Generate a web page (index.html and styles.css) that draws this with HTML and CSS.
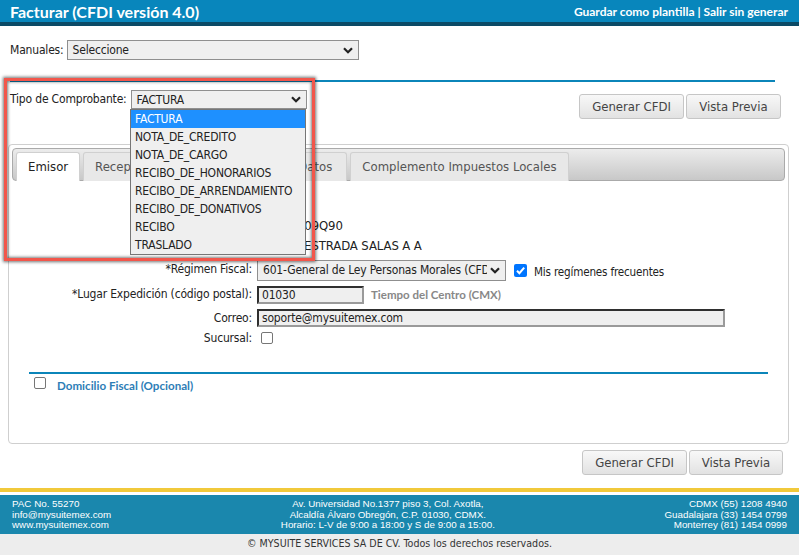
FILE: index.html
```html
<!DOCTYPE html>
<html lang="es">
<head>
<meta charset="utf-8">
<title>Facturar (CFDI versión 4.0)</title>
<link rel="stylesheet" href="styles.css">
</head>
<body>
<div class="page">
  <header class="topbar">
    <div class="title">Facturar (CFDI versión 4.0)</div>
    <div class="links">Guardar como plantilla | Salir sin generar</div>
  </header>

  <div class="manuales">
    <span class="lbl-inline">Manuales:</span>
    <div class="select sel-manuales"><span>Seleccione</span>
      <svg class="chev" width="10" height="7" viewBox="0 0 10 7"><path d="M1 1.2 L5 5.2 L9 1.2" fill="none" stroke="#222" stroke-width="2.2"/></svg>
    </div>
  </div>

  <div class="blue-line"></div>

  <div class="tipo-row">
    <span class="lbl-inline lbl-tipo">Tipo de Comprobante:</span>
    <div class="select sel-tipo"><span>FACTURA</span>
      <svg class="chev" width="10" height="7" viewBox="0 0 10 7"><path d="M1 1.2 L5 5.2 L9 1.2" fill="none" stroke="#222" stroke-width="2.2"/></svg>
    </div>
    <div class="buttons">
      <button class="btn btn-gen">Generar CFDI</button>
      <button class="btn btn-vista">Vista Previa</button>
    </div>
  </div>

  <section class="panel">
    <div class="tabbar">
      <div class="tab active">Emisor</div>
      <div class="tab">Receptor</div>
      <div class="tab">Conceptos</div>
      <div class="tab tab-otros">Otros Datos</div>
      <div class="tab">Complemento Impuestos Locales</div>
    </div>

    <div class="form">
      <div class="row r-rfc"><span class="lbl">RFC:</span><span class="val">ISE091109Q90</span></div>
      <div class="row r-razon"><span class="lbl">Razón Social:</span><span class="val">MAURO ESTRADA SALAS A A</span></div>
      <div class="row r-regimen">
        <span class="lbl">*Régimen Fiscal:</span>
        <div class="select sel-regimen"><span class="clip">601-General de Ley Personas Morales (CFDI)</span>
          <svg class="chev" width="10" height="7" viewBox="0 0 10 7"><path d="M1 1.2 L5 5.2 L9 1.2" fill="none" stroke="#222" stroke-width="2.2"/></svg>
        </div>
        <span class="cb checked"><svg width="13" height="13" viewBox="0 0 13 13"><path d="M3 6.8 L5.4 9.2 L10.2 3.6" fill="none" stroke="#fff" stroke-width="2"/></svg></span>
        <span class="cb-text">Mis regímenes frecuentes</span>
      </div>
      <div class="row r-lugar">
        <span class="lbl">*Lugar Expedición (código postal):</span>
        <div class="input in-cp">01030</div>
        <span class="tz">Tiempo del Centro (CMX)</span>
      </div>
      <div class="row r-correo">
        <span class="lbl">Correo:</span>
        <div class="input in-mail">soporte@mysuitemex.com</div>
      </div>
      <div class="row r-suc">
        <span class="lbl">Sucursal:</span>
        <span class="cb empty cb-suc"></span>
      </div>

      <div class="blue-line2"></div>
      <div class="domicilio">
        <span class="cb empty cb-dom"></span>
        <span class="dom-text">Domicilio Fiscal (Opcional)</span>
      </div>
    </div>
  </section>

  <div class="bottom-buttons">
    <button class="btn btn-gen">Generar CFDI</button>
    <button class="btn btn-vista">Vista Previa</button>
  </div>

  <footer class="footer">
    <div class="yellow"></div>
    <div class="fband">
      <div class="fcol fleft">PAC No. 55270<br>info@mysuitemex.com<br>www.mysuitemex.com</div>
      <div class="fcol fcenter">Av. Universidad No.1377 piso 3, Col. Axotla,<br>Alcaldía Álvaro Obregón, C.P. 01030, CDMX.<br>Horario: L-V de 9:00 a 18:00 y S de 9:00 a 15:00.</div>
      <div class="fcol fright">CDMX (55) 1208 4940<br>Guadalajara (33) 1454 0799<br>Monterrey (81) 1454 0999</div>
    </div>
    <div class="copy">© MYSUITE SERVICES SA DE CV. Todos los derechos reservados.</div>
  </footer>

  <div class="redbox"></div>
  <ul class="dropdown">
    <li class="hl">FACTURA</li>
    <li>NOTA_DE_CREDITO</li>
    <li>NOTA_DE_CARGO</li>
    <li>RECIBO_DE_HONORARIOS</li>
    <li>RECIBO_DE_ARRENDAMIENTO</li>
    <li>RECIBO_DE_DONATIVOS</li>
    <li>RECIBO</li>
    <li>TRASLADO</li>
  </ul>
</div>
</body>
</html>
```

FILE: styles.css
```css
* { box-sizing: border-box; }
html, body { margin: 0; padding: 0; background: #fff; }
body {
  font-family: "DejaVu Sans Condensed", "DejaVu Sans", sans-serif;
  font-size: 12px;
  letter-spacing: -0.18px;
  color: #222;
}
.page { position: relative; width: 799px; height: 555px; overflow: hidden; }

.topbar {
  height: 26px;
  background: #0886bc;
  border-bottom: 4px solid #0b4a66;
  display: flex;
  justify-content: space-between;
  align-items: center;
  padding: 0 11px 0 10px;
  color: #fff;
  font-family: Lato, sans-serif;
  font-weight: 700;
  letter-spacing: 0;
}
.title { font-size: 16px; }
.links { font-size: 12px; }

.manuales {
  display: flex;
  align-items: center;
  height: 20px;
  margin-top: 14px;
  padding-left: 10px;
}
.lbl-inline { margin-right: 3px; }
.lbl-tipo { margin-right: 4px; }

.select {
  display: flex;
  align-items: center;
  justify-content: space-between;
  border: 1px solid #8f8f8f;
  background: #efefef;
  padding: 0 5px 0 5px;
  font-size: 12px;
  color: #222;
  overflow: hidden;
  white-space: nowrap;
}
.chev { flex-shrink: 0; }
.sel-manuales { width: 292px; height: 20px; }

.blue-line { height: 2px; background: #0b85b9; margin: 20px 24px 0 10px; }

.tipo-row {
  display: flex;
  margin-top: 8px;
  padding: 0 18px 0 10px;
  height: 29px;
  align-items: flex-start;
}
.tipo-row .lbl-inline { line-height: 19px; }
.sel-tipo { width: 176px; height: 19px; }

.buttons { margin-left: auto; margin-top: 4px; display: flex; gap: 2px; }
.btn {
  height: 25px;
  border: 1px solid #c6c6c6;
  border-radius: 3px;
  background: linear-gradient(#f8f8f8, #e2e2e2);
  font-family: "DejaVu Sans Condensed", "DejaVu Sans", sans-serif;
  font-size: 13px;
  letter-spacing: 0;
  color: #444;
  padding: 0;
}
.btn-gen { width: 105px; }
.btn-vista { width: 95px; }

.panel {
  margin: 25px 0 0 8px;
  width: 781px;
  height: 300px;
  border: 1px solid #cfcfcf;
  border-radius: 4px;
  padding: 3px 3px 0 3px;
}
.tabbar {
  height: 33px;
  border: 1px solid #aaaaaa;
  border-radius: 4px;
  background: linear-gradient(#ececec, #c8c8c8);
  display: flex;
  align-items: flex-end;
  gap: 3px;
  padding: 0 0 0 3px;
}
.tab {
  height: 29px;
  margin-bottom: -1px;
  padding: 0 11px;
  border: 1px solid #d0d0d0;
  border-bottom: none;
  border-radius: 3px 3px 0 0;
  background: #e8e8e8;
  color: #555;
  font-size: 13px;
  letter-spacing: 0;
  line-height: 27px;
  white-space: nowrap;
}
.tab.active { background: #fff; color: #222; }
.tab-otros { padding-right: 14px; }

.row { display: flex; align-items: center; }
.lbl { width: 240px; margin-right: 5px; text-align: right; flex-shrink: 0; }
.val { font-size: 13px; letter-spacing: -0.1px; }
.r-rfc { margin-top: 35px; height: 18px; }
.r-razon { margin-top: 2px; height: 18px; }
.r-regimen { margin-top: 5px; height: 22px; }
.r-regimen .lbl { margin-top: -3px; }
.r-lugar { margin-top: 4px; height: 19px; }
.r-lugar .lbl { margin-top: -2px; }
.r-correo { margin-top: 4px; height: 19px; }
.r-suc { margin-top: 4px; height: 14px; }

.sel-regimen { width: 249px; height: 21px; font-size: 12px; }
.clip { overflow: hidden; white-space: nowrap; flex: 1; margin-right: 3px; }

.cb {
  display: inline-block;
  width: 13px;
  height: 13px;
  border-radius: 2px;
  flex-shrink: 0;
}
.cb.checked { background: #0075ff; margin-left: 8px; }
.cb.checked svg { display: block; }
.cb.empty { border: 1px solid #767676; background: #fff; }
.cb-text { margin-left: 7px; font-size: 11.6px; margin-top: 3px; }

.input {
  height: 18px;
  background: #efefef;
  border-top: 2px solid #2f2f2f;
  border-left: 2px solid #2f2f2f;
  border-right: 2px solid #9a9a9a;
  border-bottom: 2px solid #9a9a9a;
  padding-left: 3px;
  font-size: 12px;
  line-height: 14px;
  white-space: nowrap;
}
.in-cp { width: 107px; }
.in-mail { width: 468px; }
.tz {
  margin-left: 7px;
  font-family: Lato, sans-serif;
  font-weight: 700;
  font-size: 11.5px;
  letter-spacing: 0;
  color: #888;
}
.cb-suc { margin-left: 4px; width: 12px; height: 12px; }

.blue-line2 { height: 2px; background: #0b85b9; margin: 27px 17px 0 17px; }
.domicilio { display: flex; align-items: center; margin-top: 2px; padding-left: 22px; height: 13px; }
.cb-dom { width: 12px; height: 12px; }
.dom-text {
  margin-left: 11px;
  margin-top: 5px;
  font-family: Lato, sans-serif;
  font-weight: 700;
  font-size: 11.6px;
  letter-spacing: 0;
  color: #2d7db6;
}

.bottom-buttons {
  display: flex;
  justify-content: flex-end;
  gap: 2px;
  margin-top: 6px;
  padding-right: 16px;
}
.bottom-buttons .btn-gen { width: 105px; }
.bottom-buttons .btn-vista { width: 94px; }

.footer { margin-top: 13px; }
.yellow { height: 4px; background: #f1c93b; }
.fband {
  margin-top: 3px;
  height: 39px;
  background: #1a87ad;
  color: #fff;
  display: flex;
  justify-content: space-between;
  padding: 4px 12px 0 12px;
  font-family: "Liberation Sans", sans-serif;
  font-size: 9.8px;
  letter-spacing: 0;
  line-height: 10.7px;
}
.fcenter { text-align: center; }
.fright { text-align: right; }
.copy {
  height: 21px;
  background: #ededed;
  text-align: center;
  font-family: "DejaVu Sans Condensed", "DejaVu Sans", sans-serif;
  font-size: 10.6px;
  letter-spacing: 0;
  line-height: 19px;
  color: #333;
}

.redbox {
  position: absolute;
  left: 4px;
  top: 78px;
  width: 311px;
  height: 183px;
  border: 3px solid #f2564b;
  box-shadow: 0 0 3px 1px rgba(0,0,0,0.55), inset 0 0 3px 1px rgba(0,0,0,0.5);
  pointer-events: none;
}
.dropdown {
  position: absolute;
  left: 130px;
  top: 109px;
  width: 176px;
  margin: 0;
  padding: 0;
  list-style: none;
  background: #efefef;
  border: 1px solid #767676;
  font-size: 12px;
  letter-spacing: -0.2px;
  color: #222;
}
.dropdown li { height: 18px; line-height: 18px; padding-left: 4px; }
.dropdown li.hl { background: #1e90ff; color: #fff; }
```
